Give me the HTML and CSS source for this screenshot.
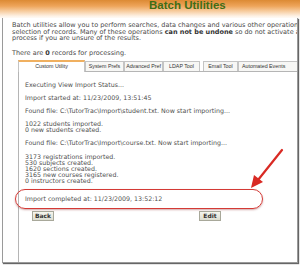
FILE: index.html
```html
<!DOCTYPE html>
<html>
    <head>
        <meta charset="utf-8">
        <title>Batch Utilities</title>
        <link rel="stylesheet" href="styles.css">
    </head>
    <body>
        <div class="page">
            <div class="titlebar">
                <h1>Batch Utilities</h1>
            </div>
            <div class="frame">
                <p class="intro">
                    <span>Batch utilities allow you to perform searches, data changes and various other operations on a</span>
                    <span>selection of records. Many of these operations <b>can not be undone</b> so do not activate a</span>
                    <span>process if you are unsure of the results.</span>
                </p>
                <p class="count">There are <b>0</b> records for processing.</p>
                <ul class="tabs">
                    <li class="tab active" style="width:67px">Custom Utility</li>
                    <li class="tab" style="width:39px">System Prefs</li>
                    <li class="tab" style="width:39px">Advanced Pref</li>
                    <li class="tab" style="width:37px">LDAP Tool</li>
                    <li class="tab gap" style="width:35px">Email Tool</li>
                    <li class="tab" style="width:80px">Automated Events</li>
                </ul>
                <div class="panel">
                    <p>Executing View Import Status...</p>
                    <p>Import started at: 11/23/2009, 13:51:45</p>
                    <p>Found file: C:\TutorTrac\Import\student.txt. Now start importing...</p>
                    <p>1022 students imported.<br>0 new students created.</p>
                    <p>Found file: C:\TutorTrac\Import\course.txt. Now start importing...</p>
                    <p class="group">3173 registrations imported.<br>530 subjects created.<br>1620 sections created.<br>3165 new courses registered.<br>0 instructors created.</p>
                    <div class="done">Import completed at: 11/23/2009, 13:52:12</div>
                    <div class="actions">
                        <input class="btn" type="button" value="Back">
                        <input class="btn" type="button" value="Edit">
                    </div>
                </div>
            </div>
            <!-- annotation arrow drawn over the screenshot -->
            <svg class="arrow" width="300" height="265" viewBox="0 0 300 265">
                <line x1="282" y1="150" x2="258" y2="180" stroke="#d92a24" stroke-width="2.2" stroke-linecap="round"/>
                <polygon points="251,188 254,175 263,182" fill="#d92a24"/>
            </svg>
        </div>
    </body>
</html>
```

FILE: styles.css
```css
*{margin:0;padding:0}
html,body{
    width:300px;
    height:265px;
    overflow:hidden;
    background:#fff;
}
body{
    font-family:"DejaVu Sans",Verdana,sans-serif;
    font-size:6.5px;
    color:#555;
}
.page{
    position:relative;
    display:flex;
    flex-direction:column;
    height:265px;
}
.titlebar{
    height:18px;
    flex:none;
    background:linear-gradient(#dc8a34 0,#eea45a 6px,#f8d3ab 12px,#fdf1e4 16px,#fff 19px);
}
.titlebar h1{
    padding-left:149px;
    font-family:"Liberation Sans",Arial,sans-serif;
    font-size:11.5px;
    line-height:12px;
    margin-top:-1px;
    color:#3f6d17;
}
.frame{
    flex:1;
    display:flex;
    flex-direction:column;
    margin:0 2px 2px 2px;
    border:1px solid #9a9a9a;
    border-top:none;
    box-shadow:1px 1px 1px #666;
    overflow:hidden;
}
.intro{
    margin-top:4px;
    padding-left:9px;
    line-height:6.5px;
    color:#4a4a4a;
    white-space:nowrap;
}
.intro span{
    display:block;
}
.intro b,.count b{
    color:#333;
}
.count{
    margin-top:8px;
    padding-left:9px;
    line-height:6px;
    color:#4a4a4a;
}
.tabs{
    list-style:none;
    display:flex;
    margin:4px 0 0 15px;
    height:11px;
    border-bottom:1px solid #b5b5b5;
}
.tab{
    flex:none;
    height:10px;
    margin-top:1px;
    border:1px solid #c4c4c4;
    border-bottom:none;
    background:#f7f7f5;
    font-family:"Liberation Sans",Arial,sans-serif;
    font-size:5.3px;
    line-height:9px;
    color:#333;
    text-align:center;
    white-space:nowrap;
    overflow:hidden;
    box-sizing:border-box;
}
.tab:last-child{
    text-align:left;
    padding-left:3px;
}
.tab.active{
    margin-top:0;
    border-top:2px solid #f0b060;
    background:#fff;
    margin-bottom:-1px;
    height:12px;
}
.tab.gap{
    margin-left:3px;
}
.panel{
    flex:1;
    margin-left:15px;
    border-left:1px solid #b5b5b5;
    padding:10px 0 0 6px;
    white-space:nowrap;
    font-size:6.3px;
    color:#4f4f4f;
}
.panel p{
    line-height:6px;
    margin-bottom:7px;
}
.panel p.group{
    margin-top:8px;
    margin-bottom:5px;
}
.done{
    margin-left:-10px;
    width:248px;
    height:20px;
    box-sizing:border-box;
    padding-left:9px;
    border:1.5px solid #d43a36;
    border-radius:10px;
    box-shadow:0 1px 2px rgba(120,0,0,.35);
    line-height:17px;
}
.actions{
    display:flex;
    justify-content:space-between;
    width:189px;
    margin:2px 0 0 7px;
}
.btn{
    width:22px;
    height:10px;
    border:1px solid #a8a89a;
    background:linear-gradient(#f6f6ee,#dcdcd0);
    font-family:"DejaVu Sans",Verdana,sans-serif;
    font-size:6px;
    font-weight:bold;
    color:#333;
    line-height:8px;
}
.arrow{
    position:absolute;
    top:0;
    left:0;
    pointer-events:none;
}
```
